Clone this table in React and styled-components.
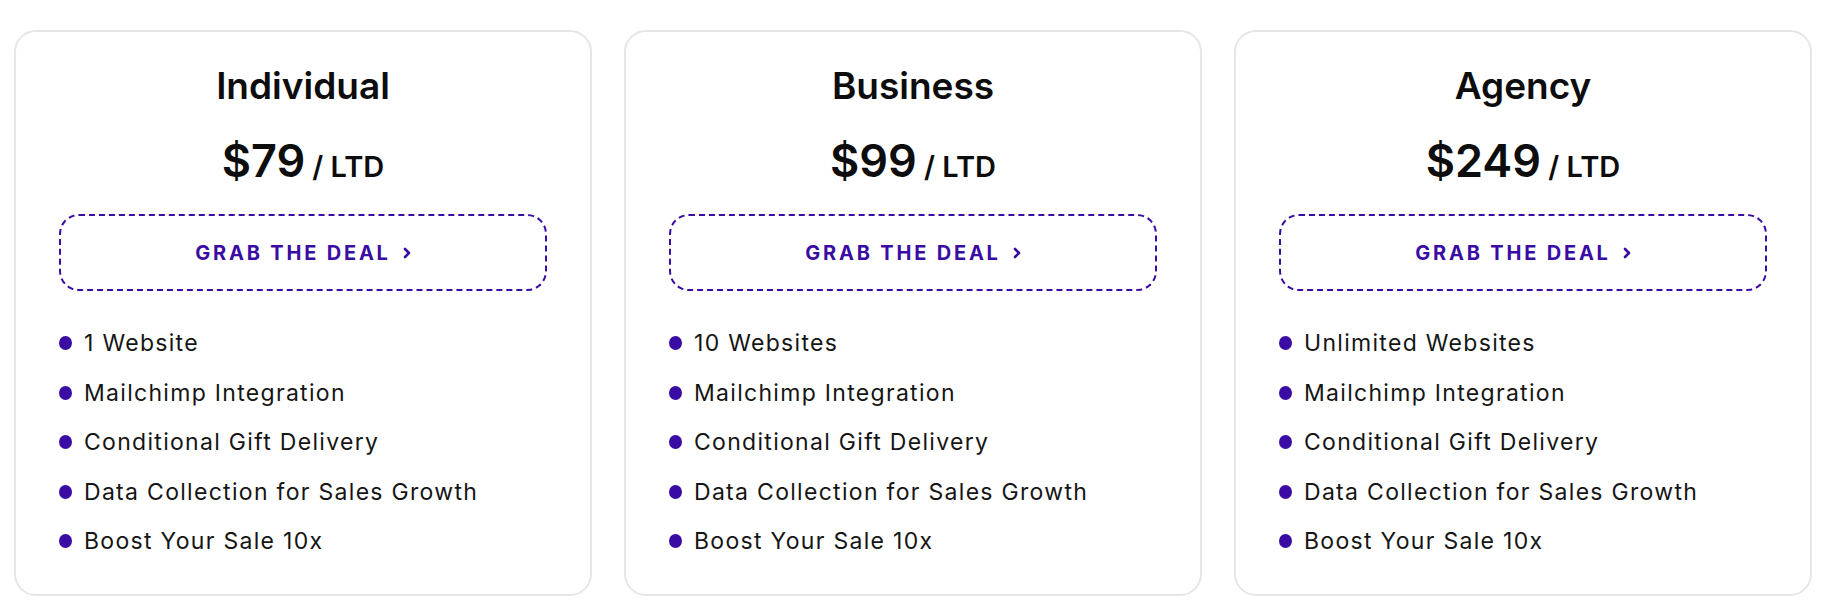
import React from "react";
import styled, { createGlobalStyle } from "styled-components";

const GlobalStyle = createGlobalStyle`
  body {
    margin: 0;
    background: #ffffff;
    font-family: "Inter", "Liberation Sans", sans-serif;
  }
`;

const purple = "#3a0ca3";

const Wrapper = styled.div`
  display: flex;
  gap: 32px;
  padding: 30px 25px 0 14px;
`;

const Card = styled.div`
  width: 578px;
  height: 566px;
  box-sizing: border-box;
  border: 2px solid #e6e6e6;
  border-radius: 22px;
  padding: 31px 43px 0;
  display: flex;
  flex-direction: column;
  align-items: stretch;
`;

const Title = styled.h2`
  margin: 0;
  text-align: center;
  font-family: "Inter", sans-serif;
  font-weight: 600;
  font-size: 37px;
  line-height: 46px;
  color: #0d0d0d;
`;

const Price = styled.div`
  margin-top: 24px;
  display: flex;
  justify-content: center;
  align-items: baseline;
  gap: 7px;
  color: #0d0d0d;
  font-family: "Inter", sans-serif;
  font-weight: 600;

  .amount {
    font-size: 45px;
    line-height: 56px;
  }

  .per {
    font-size: 29px;
  }
`;

const DealButton = styled.a`
  margin-top: 25px;
  height: 77px;
  box-sizing: border-box;
  border: 2px dashed ${purple};
  border-radius: 20px;
  display: flex;
  justify-content: center;
  align-items: center;
  gap: 12px;
  color: ${purple};
  font-family: "Inter", sans-serif;
  font-weight: 700;
  font-size: 20px;
  letter-spacing: 2.8px;
  text-decoration: none;
  cursor: pointer;

  svg {
    width: 8px;
    height: 12px;
  }
`;

const Features = styled.ul`
  list-style: none;
  margin: 38px 0 0;
  padding: 0;
  display: flex;
  flex-direction: column;
  gap: 21.5px;
`;

const Feature = styled.li`
  display: flex;
  align-items: center;
  gap: 12px;
  font-family: "Inter", sans-serif;
  font-size: 23px;
  line-height: 28px;
  letter-spacing: 1.3px;
  color: #151515;

  &::before {
    content: "";
    width: 13px;
    height: 14px;
    border-radius: 50%;
    background: ${purple};
    flex-shrink: 0;
  }
`;

const plans = [
  { name: "Individual", price: "$79", sites: "1 Website" },
  { name: "Business", price: "$99", sites: "10 Websites" },
  { name: "Agency", price: "$249", sites: "Unlimited Websites" },
];

const common = [
  "Mailchimp Integration",
  "Conditional Gift Delivery",
  "Data Collection for Sales Growth",
  "Boost Your Sale 10x",
];

const Chevron = () => (
  <svg viewBox="0 0 8 12" fill="none">
    <polyline
      points="2,2 6,6 2,10"
      stroke="currentColor"
      strokeWidth="2.6"
      strokeLinecap="round"
      strokeLinejoin="round"
    />
  </svg>
);

const App = () => {
  return (
    <>
      <GlobalStyle />
      <Wrapper>
        {plans.map((plan) => (
          <Card key={plan.name}>
            <Title>{plan.name}</Title>
            <Price>
              <span className="amount">{plan.price}</span>
              <span className="per">/ LTD</span>
            </Price>
            <DealButton>
              GRAB THE DEAL <Chevron />
            </DealButton>
            <Features>
              {[plan.sites, ...common].map((item) => (
                <Feature key={item}>{item}</Feature>
              ))}
            </Features>
          </Card>
        ))}
      </Wrapper>
    </>
  );
};

export default App;
